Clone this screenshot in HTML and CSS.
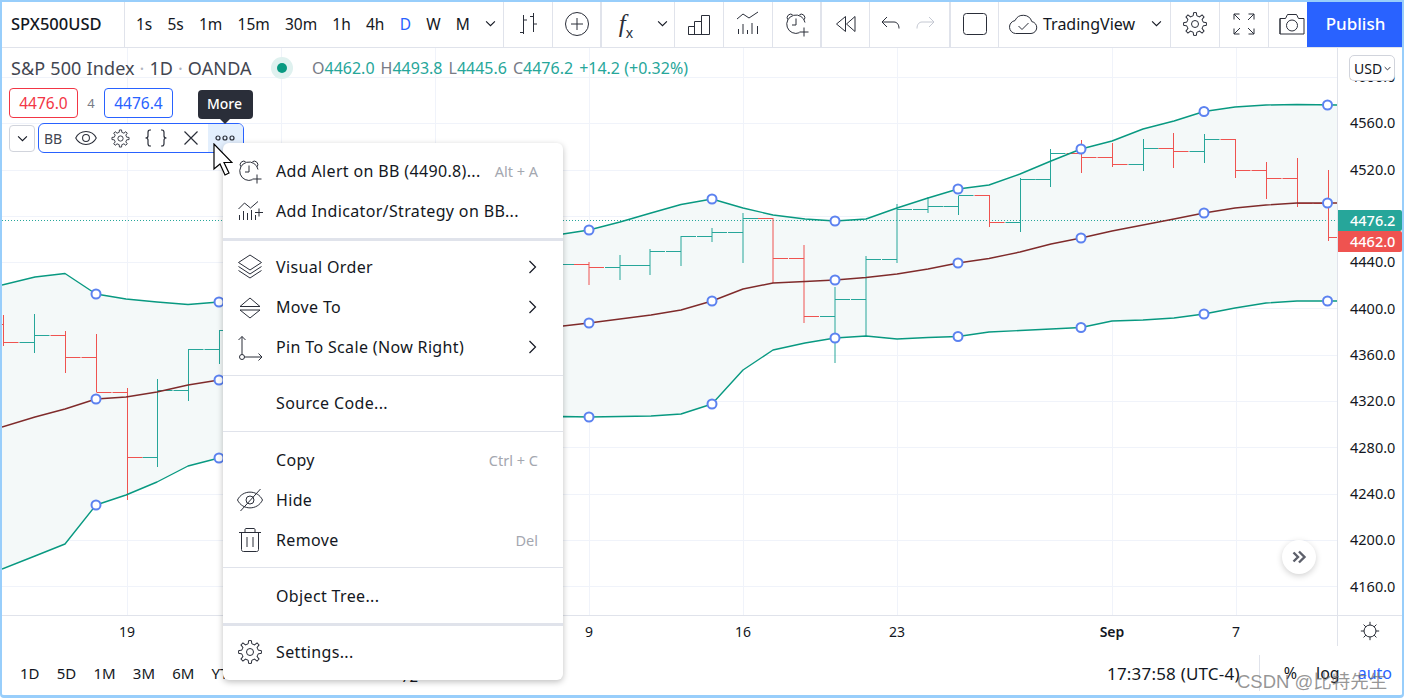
FILE: index.html
```html
<!DOCTYPE html>
<html lang="en">
<head>
<meta charset="utf-8">
<title>SPX500USD</title>
<link rel="stylesheet" href="styles.css">
</head>
<body>
<svg class="defs" aria-hidden="true">
  <defs>
    <symbol id="gear" viewBox="0 0 28 28">
      <g id="gs"><path d="M10.8 6.3L12.2 5.8 12.6 2.6H15.4L15.8 5.8 17.2 6.3"/></g>
      <use href="#gs" transform="rotate(45 14 14)"/><use href="#gs" transform="rotate(90 14 14)"/>
      <use href="#gs" transform="rotate(135 14 14)"/><use href="#gs" transform="rotate(180 14 14)"/>
      <use href="#gs" transform="rotate(225 14 14)"/><use href="#gs" transform="rotate(270 14 14)"/>
      <use href="#gs" transform="rotate(315 14 14)"/>
      <circle cx="14" cy="14" r="3.5"/>
    </symbol>
    <symbol id="alarm" viewBox="0 0 28 28">
      <path d="M16.5 22.7A9.2 9.2 0 1 1 22 12.5M4.6 9.5A3.6 3.6 0 0 1 9.5 4.6M16.5 4.6A3.6 3.6 0 0 1 21.4 9.5M13 8.5V15H9M21 17.5V26.5M16.5 22H25.5"/>
    </symbol>
    <symbol id="eye" viewBox="0 0 28 28">
      <path d="M2 14C7 4 21 4 26 14 21 24 7 24 2 14Z"/><circle cx="14" cy="14" r="4"/>
    </symbol>
  </defs>
</svg>
<div class="frame">
  <header class="topbar">
    <div class="cell symbol">SPX500USD</div>
    <div class="cell intervals">
      <span>1s</span><span>5s</span><span>1m</span><span>15m</span><span>30m</span><span>1h</span><span>4h</span><span class="active">D</span><span>W</span><span>M</span>
      <svg class="chev" viewBox="0 0 10 6"><path d="M1 1L5 5 9 1"/></svg>
    </div>
    <div class="cell btn"><svg class="ic" viewBox="0 0 28 28"><path d="M9.5 5V24M6 22.5H9.5M9.5 10H13M19.5 3V22M16 6.5H19.5M19.5 14H23"/></svg></div>
    <div class="cell btn thick"><svg class="ic" viewBox="0 0 28 28"><circle cx="14" cy="14" r="11.5"/><path d="M14 8V20M8 14H20"/></svg></div>
    <div class="cell btn fx"><span class="fxt">f<sub>x</sub></span><svg class="chev" viewBox="0 0 10 6"><path d="M1 1L5 5 9 1"/></svg></div>
    <div class="cell btn"><svg class="ic" viewBox="0 0 28 28"><path d="M3.5 16.5H9.5V24.5H3.5ZM9.5 24.5V11.5H16.5V24.5M16.5 24.5V5.5H24.5V24.5H3.5"/></svg></div>
    <div class="cell btn"><svg class="ic" viewBox="0 0 28 28"><path d="M3 9L9 4 15 8 24 2M4.5 24V19M9 24V14M13.5 24V20M18 24V13M23.5 24V16"/></svg></div>
    <div class="cell btn thick"><svg class="ic"><use href="#alarm"/></svg></div>
    <div class="cell btn n48"><svg class="ic" viewBox="0 0 28 28"><path d="M13.5 6.5L4.5 14 13.5 21.5ZM23 6.5L14.5 14 23 21.5Z"/></svg></div>
    <div class="cell btn undo thick">
      <svg class="ic" viewBox="0 0 28 28"><path d="M10 7L5 12 10 17M5 12H17C20 12 22 14.5 22 18.5"/></svg>
      <svg class="ic off" viewBox="0 0 28 28"><path d="M18 7L23 12 18 17M23 12H11C8 12 6 14.5 6 18.5"/></svg>
    </div>
    <div class="cell btn n48"><svg class="ic" viewBox="0 0 28 28"><rect x="2.500" y="3.500" width="23" height="21" rx="3"/></svg></div>
    <div class="cell layout">
      <svg class="cloud" viewBox="0 0 30 22"><path d="M7.500 20.500H23A6 6 0 0 0 23.800 8.600 9 9 0 0 0 7 7.600 6.500 6.500 0 0 0 7.500 20.500ZM10.500 13L14 16.500 20.500 10"/></svg>
      <span class="layout-name">TradingView</span>
      <svg class="chev" viewBox="0 0 10 6"><path d="M1 1L5 5 9 1"/></svg>
    </div>
    <div class="cell btn"><svg class="ic"><use href="#gear"/></svg></div>
    <div class="cell btn"><svg class="ic" viewBox="0 0 28 28"><path d="M4 9.500V4H9.500M4 4L10 10M18.500 4H24V9.500M24 4L18 10M4 18.500V24H9.500M4 24L10 18M24 18.500V24H18.500M24 24L18 18"/></svg></div>
    <div class="cell camera"><svg class="ic wide" viewBox="0 0 28 22"><path d="M2 5.500H7.500L9.500 1.500H18.500L20.500 5.500H26V21H2ZM2 5.500V21" stroke-linejoin="round"/><circle cx="14" cy="12.500" r="5.500"/></svg></div>
    <button class="publish">Publish</button>
  </header>

  <main class="main">
    <div class="chart">
      <svg class="plot" viewBox="2 48 1335 567">
        <path class="grid" d="M127.500 48V615M281.500 48V615M435.500 48V615M589.500 48V615M743.500 48V615M897.500 48V615M1112.500 48V615M1236.500 48V615M2 77.500H1337M2 123.500H1337M2 170.500H1337M2 216.500H1337M2 262.500H1337M2 308.500H1337M2 355.500H1337M2 401.500H1337M2 447.500H1337M2 494.500H1337M2 540.500H1337M2 586.500H1337"/>
        <polygon class="band" points="2,285 35,277 65,273.500 96,294 126,299 157,302 188,304.500 219,302 563,234 589,230 620,222 651,213 681,204.500 712,199 743,208 773,215 805,219 835,221 866,219 897,208 928,198 958,189 989,185 1020,174 1051,161 1081,149 1112,141 1143,129 1174,121 1204,111.500 1235,107 1266,105 1297,104.500 1337,105 1337,301 1297,301 1266,303 1235,308 1204,314 1174,318 1143,320 1112,321 1081,327.500 1051,329 1020,330.500 989,332 958,336.500 928,337.500 897,339 866,336 835,338 805,343 773,350 743,370 712,404 681,414 651,416 620,416.500 589,417 563,416.500 219,458 188,466 157,482 126,495 96,505 65,544 35,556 2,569"/>
        <path class="lastline" d="M2 220.500H1337"/>
        <path class="up" d="M34.500 314V353M19.500 342.500H34.500M34.500 335.500H49.500M157.500 379V467M142.500 457.500H157.500M157.500 390.500H172.500M188.500 349V401M173.500 390.500H188.500M188.500 349.500H203.500M219.500 330V364M204.500 349.500H219.500M219.500 330.500H234.500M563 264.500H574M620 255V280M605 267.500H620M620 265.500H635M650 249V275M635 265.500H650M650 251.500H665M681 236V266M666 251.500H681M681 236.500H696M712 228V242M697 236.500H712M712 232.500H727M743 213V263M728 232.500H743M743 218.500H758M835 287V363M820 316.500H835M835 299.500H850M866 256V336M851 299.500H866M866 259.500H881M897 204V263M882 259.500H897M897 209.500H912M928 197V213M913 209.500H928M928 206.500H943M958.500 196V215M943.500 206.500H958.500M958.500 195.500H973.500M1020.500 178V232M1005.500 222.500H1020.500M1020.500 179.500H1035.500M1050.500 149V187M1035.500 179.500H1050.500M1050.500 153.500H1065.500M1143.500 139V171M1128.500 164.500H1143.500M1143.500 148.500H1158.500M1204.500 134V163M1189.500 151.500H1204.500M1204.500 139.500H1219.500"/>
        <path class="down" d="M3.500 315V346M2 324.500H3.500M3.500 342.500H18.500M65.500 331V373M50.500 335.500H65.500M65.500 357.500H80.500M96.500 334V392M81.500 357.500H96.500M96.500 392.500H111.500M127.500 388V500M112.500 392.500H127.500M127.500 457.500H142.500M589 262V285M574 264.500H589M589 267.500H604M773 218V283M758 218.500H773M773 258.500H788M804 245V323M789 258.500H804M804 316.500H819M989.500 195V227M974.500 195.500H989.500M989.500 222.500H1004.500M1081.500 140V173M1066.500 153.500H1081.500M1081.500 157.500H1096.500M1112.500 143V167M1097.500 157.500H1112.500M1112.500 164.500H1127.500M1173.500 133V168M1158.500 148.500H1173.500M1173.500 151.500H1188.500M1235.500 139V178M1220.500 139.500H1235.500M1235.500 170.500H1250.500M1266.500 162V199M1251.500 170.500H1266.500M1266.500 178.500H1281.500M1297.500 158V207M1282.500 178.500H1297.500M1297.500 203.500H1312.500M1328.500 170V241M1313.500 203.500H1328.500M1328.500 237.500H1337"/>
        <polyline class="bb" points="2,285 35,277 65,273.500 96,294 126,299 157,302 188,304.500 219,302 563,234 589,230 620,222 651,213 681,204.500 712,199 743,208 773,215 805,219 835,221 866,219 897,208 928,198 958,189 989,185 1020,174 1051,161 1081,149 1112,141 1143,129 1174,121 1204,111.500 1235,107 1266,105 1297,104.500 1337,105"/>
        <polyline class="bb" points="2,569 35,556 65,544 96,505 126,495 157,482 188,466 219,458 563,416.500 589,417 620,416.500 651,416 681,414 712,404 743,370 773,350 805,343 835,338 866,336 897,339 928,337.500 958,336.500 989,332 1020,330.500 1051,329 1081,327.500 1112,321 1143,320 1174,318 1204,314 1235,308 1266,303 1297,301 1337,301"/>
        <polyline class="basis" points="2,427 35,417 65,409 96,399 126,397 157,392 188,385 219,380 563,326 589,323 620,319 651,315 681,310 712,301 743,289 773,283 805,281.500 835,280 866,277.500 897,274 928,269 958,263 989,258.500 1020,252 1051,244 1081,238 1112,231 1143,225 1174,219 1204,213 1235,208 1266,205 1297,203 1337,203"/>
        <g class="anchors">
          <circle cx="96" cy="294" r="4.500"/><circle cx="96" cy="399" r="4.500"/><circle cx="96" cy="505" r="4.500"/>
          <circle cx="219" cy="302" r="4.500"/><circle cx="219" cy="380" r="4.500"/><circle cx="219" cy="458" r="4.500"/>
          <circle cx="589" cy="230" r="4.500"/><circle cx="589" cy="323" r="4.500"/><circle cx="589" cy="417" r="4.500"/>
          <circle cx="712" cy="199" r="4.500"/><circle cx="712" cy="301" r="4.500"/><circle cx="712" cy="404" r="4.500"/>
          <circle cx="835" cy="221" r="4.500"/><circle cx="835" cy="280" r="4.500"/><circle cx="835" cy="338" r="4.500"/>
          <circle cx="958" cy="189" r="4.500"/><circle cx="958" cy="263" r="4.500"/><circle cx="958" cy="336.500" r="4.500"/>
          <circle cx="1081" cy="149" r="4.500"/><circle cx="1081" cy="238" r="4.500"/><circle cx="1081" cy="327.500" r="4.500"/>
          <circle cx="1204" cy="111.500" r="4.500"/><circle cx="1204" cy="213" r="4.500"/><circle cx="1204" cy="314" r="4.500"/>
          <circle cx="1327.500" cy="105" r="4.500"/><circle cx="1327.500" cy="203" r="4.500"/><circle cx="1327.500" cy="301" r="4.500"/>
        </g>
      </svg>

      <div class="legend">
        <div class="legend-title">
          <span class="title">S&amp;P 500 Index <i>·</i> 1D <i>·</i> OANDA</span>
          <span class="status"></span>
          <span class="ohlc">
            <span><b>O</b>4462.0</span><span><b>H</b>4493.8</span><span><b>L</b>4445.6</span><span><b>C</b>4476.2</span><span>+14.2 (+0.32%)</span>
          </span>
        </div>
        <div class="order">
          <span class="tag sell">4476.0</span><span class="spread">4</span><span class="tag buy">4476.4</span>
        </div>
        <div class="study">
          <span class="collapse"><svg class="chev" viewBox="0 0 10 6"><path d="M1 1L5 5 9 1"/></svg></span>
          <div class="study-box">
            <span class="study-name">BB</span>
            <span class="tool"><svg class="i24"><use href="#eye"/></svg></span>
            <span class="tool"><svg class="i21"><use href="#gear"/></svg></span>
            <span class="tool"><svg class="i24" viewBox="0 0 24 24"><path d="M7 4H6C4.500 4 4 5 4 6.500V10C4 11 3.500 12 1.500 12 3.500 12 4 13 4 14V17.500C4 19 4.500 20 6 20H7M17 4H18C19.500 4 20 5 20 6.500V10C20 11 20.500 12 22.500 12 20.500 12 20 13 20 14V17.500C20 19 19.500 20 18 20H17"/></svg></span>
            <span class="tool"><svg class="i24" viewBox="0 0 24 24"><path d="M5.500 5.500L18.500 18.500M18.500 5.500L5.500 18.500"/></svg></span>
            <span class="tool more"><svg class="i24" viewBox="0 0 24 24"><circle cx="5" cy="12" r="2"/><circle cx="12" cy="12" r="2"/><circle cx="19" cy="12" r="2"/></svg></span>
          </div>
        </div>
      </div>
      <span class="goto"><svg viewBox="0 0 18 18"><path d="M3.500 4.500L8 9 3.500 13.500M9 3.500L14.500 9 9 14.500"/></svg></span>
    </div>
    <aside class="priceaxis">
      <span class="currency">USD<svg viewBox="0 0 10 6"><path d="M1 1L5 5 9 1"/></svg></span>
      <span>4600.0</span><span>4560.0</span><span>4520.0</span><span>4480.0</span><span>4440.0</span><span>4400.0</span><span>4360.0</span><span>4320.0</span><span>4280.0</span><span>4240.0</span><span>4200.0</span><span>4160.0</span>
      <em class="plabel last">4476.2</em>
      <em class="plabel hl">4462.0</em>
    </aside>
  </main>

  <div class="timeaxis">
    <svg class="timescale" viewBox="2 0 1335 30">
      <text x="127" y="21">19</text><text x="589" y="21">9</text><text x="743" y="21">16</text><text x="897" y="21">23</text><text x="1112" y="21" class="strong">Sep</text><text x="1236" y="21">7</text>
    </svg>
    <div class="sun"><svg viewBox="0 0 24 24"><circle cx="12" cy="12" r="6.500"/><path d="M12 2V5.500M12 18.500V22M2 12H5.500M18.500 12H22M5 5L7.500 7.500M19 5L16.500 7.500M5 19L7.500 16.500M19 19L16.500 16.500"/></svg></div>
  </div>

  <footer class="bottombar">
    <div class="ranges">
      <span>1D</span><span>5D</span><span>1M</span><span>3M</span><span>6M</span><span>YTD</span><span>1Y</span>
    </div>
    <span class="peek">72</span>
    <div class="status-right">
      <span class="clock">17:37:58 (UTC-4)</span>
      <span class="vsep"></span>
      <span>%</span><span>log</span><span class="auto">auto</span>
    </div>
  </footer>

  <div class="tooltip">More</div>

  <nav class="menu">
    <div class="row"><svg class="ic"><use href="#alarm"/></svg><span>Add Alert on BB (4490.8)...</span><kbd>Alt + A</kbd></div>
    <div class="row"><svg class="ic" viewBox="0 0 28 28"><path d="M2.500 12L8.500 6 14.500 11 22 4.500M3.500 23V18M7.500 23V14M11.500 23V16M15.500 23V13M19.500 23V18M23 11.500V19.500M19 15.500H27"/></svg><span>Add Indicator/Strategy on BB...</span></div>
    <div class="sep thick"></div>
    <div class="row"><svg class="ic" viewBox="0 0 28 28"><path d="M14 2L25.500 9.500 14 17 2.500 9.500ZM2.500 13.500L14 21 25.500 13.500M2.500 17.500L14 25 25.500 17.500"/></svg><span>Visual Order</span><svg class="arrow" viewBox="0 0 8 14"><path d="M1 1L7 7 1 13"/></svg></div>
    <div class="row"><svg class="ic" viewBox="0 0 28 28"><path d="M4 13.500L14 5 24 13.500ZM4 13.500H24M4 17H24L14 25Z"/></svg><span>Move To</span><svg class="arrow" viewBox="0 0 8 14"><path d="M1 1L7 7 1 13"/></svg></div>
    <div class="row"><svg class="ic" viewBox="0 0 28 28"><circle cx="6" cy="24" r="2.500"/><path d="M6 21.500V3.500M2.500 7L6 3.500 9.500 7M8.500 24H26M22.500 20.500L26 24 22.500 27.500"/></svg><span>Pin To Scale (Now Right)</span><svg class="arrow" viewBox="0 0 8 14"><path d="M1 1L7 7 1 13"/></svg></div>
    <div class="sep gap-b"></div>
    <div class="row"><span class="noicon">Source Code...</span></div>
    <div class="sep"></div>
    <div class="row"><span class="noicon">Copy</span><kbd>Ctrl + C</kbd></div>
    <div class="row"><svg class="ic" viewBox="0 0 28 28"><path d="M1.500 14C6.500 3.500 21.500 3.500 26.500 14 21.500 24.500 6.500 24.500 1.500 14ZM10 14A4 4 0 0 1 18 14 4 4 0 0 1 10 14ZM4.500 25L24.500 3"/></svg><span>Hide</span></div>
    <div class="row"><svg class="ic" viewBox="0 0 28 28"><path d="M3 6.500H25M9 6.500V3.500C9 3 9.500 2.500 10 2.500H18C18.500 2.500 19 3 19 3.500V6.500M5.500 6.500V23.500C5.500 24.800 6.200 25.500 7.500 25.500H20.500C21.800 25.500 22.500 24.800 22.500 23.500V6.500M11 11V21M17 11V21"/></svg><span>Remove</span><kbd>Del</kbd></div>
    <div class="sep gap-t"></div>
    <div class="row"><span class="noicon">Object Tree...</span></div>
    <div class="sep thick"></div>
    <div class="row"><svg class="ic"><use href="#gear"/></svg><span>Settings...</span></div>
  </nav>

  <svg class="cursor" viewBox="0 0 20 34"><path d="M1 1V26L7 21 12 32 16 30 11 19.500 19 19.500Z"/></svg>
  <div class="watermark">CSDN @比特先生</div>
</div>
</body>
</html>
```
FILE: styles.css
```css
* { box-sizing: border-box; }
html, body { margin: 0; height: 100%; overflow: hidden; background: #fff; }
body { font-family: "Noto Sans", "Liberation Sans", sans-serif; color: #131722; }
svg { fill: none; stroke: #2a2e39; stroke-width: 1; flex: none; }
.defs { position: absolute; width: 0; height: 0; }
.frame {
  position: relative; width: 1404px; height: 698px; display: flex; flex-direction: column; overflow: hidden;
  border: solid #98cefb; border-width: 2px 2px 3px 2px; border-radius: 0 0 4px 4px; background: #fff;
}

/* top toolbar */
.topbar { display: flex; height: 46px; border-bottom: 1px solid #e0e3eb; flex: none; }
.cell { display: flex; align-items: center; height: 100%; padding-bottom: 2px; border-right: 1px solid #e0e3eb; flex: none; }
.symbol { width: 123px; padding-left: 9px; font-size: 16.5px; font-weight: 500; }
.intervals { width: 379px; padding-left: 11px; gap: 15.2px; font-size: 15.5px; }
.intervals .active { color: #2962ff; }
.chev { width: 11px; height: 7px; stroke: #131722; }
.btn { width: 49px; justify-content: center; }
.n48 { width: 48px; }
.thick { border-right-width: 2px; }
.ic { width: 28px; height: 28px; }
.fx { width: 73px; justify-content: flex-start; padding-left: 10px; gap: 17px; }
.fxt { width: 28px; font: italic 25px "Liberation Serif", serif; line-height: 28px; text-align: center; color: #2a2e39; }
.fxt sub { font: 14px "Noto Sans", sans-serif; line-height: 0; }
.undo { width: 81px; gap: 6px; padding-right: 4px; }
.off { stroke: #c4c8d2; }
.layout { width: 172px; padding-left: 9px; font-size: 16px; }
.cloud { width: 30px; height: 22px; }
.layout-name { margin-left: 5px; width: 108px; }
.camera { flex: 1; border: 0; padding-left: 9px; overflow: hidden; }
.wide { height: 22px; }
.publish { width: 95px; height: 100%; padding: 0 0 2px 2px; border: 0; background: #2962ff; color: #fff; font: 500 17px "Noto Sans", sans-serif; flex: none; }

/* chart */
.main { display: flex; height: 567px; flex: none; }
.chart { position: relative; flex: 1; overflow: hidden; }
.plot { display: block; width: 1335px; height: 567px; }
.grid { stroke: #f0f3fa; }
.band { fill: #f4f9f9; stroke: none; }
.lastline { stroke: #26a69a; stroke-dasharray: 1 2; }
.up { stroke: #26a69a; }
.down { stroke: #ef5350; }
.bb { fill: none; stroke: #089981; stroke-width: 1.4; stroke-linejoin: round; }
.basis { fill: none; stroke: #7f2b2b; stroke-width: 1.4; stroke-linejoin: round; }
.anchors circle { fill: #fff; stroke: #5c82f0; stroke-width: 2; }

.legend { position: absolute; left: 7px; top: 8px; display: flex; flex-direction: column; }
.legend-title { display: flex; align-items: center; height: 24px; padding-left: 2px; }
.title { font-size: 18px; letter-spacing: .15px; color: #434651; width: 241px; white-space: nowrap; }
.title i { font-style: normal; color: #b2b5be; }
.status { width: 10px; height: 10px; margin: 0 0 0 25px; border-radius: 50%; background: #089981; box-shadow: 0 0 0 6px #dff1ef; }
.ohlc { display: flex; gap: 6px; margin-left: 25px; font-size: 16px; color: #26a69a; white-space: nowrap; }
.ohlc b { font-weight: 400; color: #787b86; }
.order { display: flex; align-items: center; height: 30px; margin-top: 8px; }
.tag { width: 69px; height: 30px; line-height: 28px; border: 1px solid; border-radius: 4px; text-align: center; font-size: 15.5px; background: #fff; }
.sell { color: #f23645; border-color: #f23645; }
.buy { color: #2962ff; border-color: #2962ff; }
.spread { width: 26px; text-align: center; font-size: 13px; color: #787b86; }
.study { display: flex; align-items: center; margin-top: 5px; height: 30px; gap: 3px; }
.collapse { display: flex; align-items: center; justify-content: center; width: 26px; height: 27px; border: 1px solid #d1d4dc; border-radius: 4px; background: #fff; }
.study-box { display: flex; align-items: center; width: 206px; height: 30px; border: 1px solid #2962ff; border-radius: 6px; background: #fff; overflow: hidden; }
.study-name { width: 29px; padding-left: 5px; font-size: 14px; color: #434651; }
.tool { display: flex; align-items: center; justify-content: center; width: 35px; height: 100%; }
.tool svg { stroke-width: 1.2; }
.i24 { width: 24px; height: 24px; }
.i21 { width: 21px; height: 21px; }
.more { background: #e3effd; width: 35px; margin-left: auto; padding-right: 1px; }
.goto { position: absolute; left: 1280px; top: 492px; display: flex; align-items: center; justify-content: center; width: 34px; height: 34px; border-radius: 50%; background: #fff; box-shadow: 0 2px 6px rgba(0,0,0,.18); }
.goto svg { width: 18px; height: 18px; stroke: #5d606b; stroke-width: 2.4; }

.priceaxis { position: relative; width: 65px; flex: none; display: flex; flex-direction: column; padding: 5px 0 0 12px; border-left: 1px solid #e0e3eb; font-size: 14.5px; color: #131722; }
.priceaxis > span:not(.currency) { display: flex; align-items: center; height: 46.33px; flex: none; }
.currency { position: absolute; left: 11px; top: 7px; display: flex; align-items: center; gap: 2px; width: 46px; height: 26px; padding-left: 4px; border: 1px solid #d1d4dc; border-radius: 5px; background: #fff; z-index: 1; font-size: 14px; }
.currency svg { width: 7px; height: 5px; stroke-width: 1.4; }
.plabel { position: absolute; left: 0; width: 64px; height: 21px; line-height: 21px; padding-left: 12px; font-style: normal; font-weight: 500; color: #fff; border-radius: 0 2px 2px 0; }
.last { top: 162px; background: #26a69a; }
.hl { top: 183px; background: #ef5350; }

/* time axis */
.timeaxis { display: flex; height: 31px; border-top: 1px solid #e0e3eb; flex: none; }
.timescale { width: 1335px; height: 30px; display: block; stroke: none; }
.timescale text { fill: #131722; stroke: none; font-size: 14px; text-anchor: middle; }
.timescale .strong { font-weight: 600; }
.sun { flex: 1; display: flex; align-items: center; justify-content: center; border-left: 1px solid #e0e3eb; }
.sun svg { width: 22px; height: 22px; stroke: #131722; }

/* bottom bar */
.bottombar { position: relative; display: flex; flex: 1; align-items: center; padding-top: 5px; font-size: 15px; }
.ranges { display: flex; gap: 17.2px; width: 373px; height: 100%; padding: 5px 0 0 18px; align-items: center; margin-top: -5px; white-space: nowrap; overflow: hidden; }
.peek { margin: 6px 0 0 26px; }
.status-right { display: flex; align-items: center; margin-left: auto; height: 100%; font-size: 16px; }
.clock { font-size: 17px; letter-spacing: .2px; margin-right: 19px; }
.vsep { width: 1px; height: 36px; margin-right: 24px; background: #e0e3eb; }
.status-right span:nth-child(4) { margin: 0 22px 0 19px; }
.auto { color: #2962ff; margin: 0 10px 0 -4px; }

/* tooltip and context menu */
.tooltip { position: absolute; left: 196px; top: 88px; width: 55px; height: 29px; padding-right: 2px; line-height: 28px; text-align: center; font-size: 14px; font-weight: 500; color: #fff; background: #2a2e39; border-radius: 4px; }
.tooltip::after { content: ""; position: absolute; left: 22px; top: 29px; border: 5px solid transparent; border-top-color: #2a2e39; border-bottom: 0; }
.menu { position: absolute; left: 221px; top: 141px; width: 340px; height: 537px; padding: 8px 0; background: #fff; border-radius: 6px; box-shadow: 0 2px 6px rgba(0,0,0,.25); }
.row { display: flex; align-items: center; height: 40px; padding: 0 25px 0 13px; gap: 12px; font-size: 16px; letter-spacing: .35px; color: #131722; white-space: nowrap; }
.noicon { margin-left: 40px; }
.row kbd { margin-left: auto; font: 14.5px "Noto Sans", sans-serif; letter-spacing: 0; color: #a4a7b0; }
.arrow { width: 9px; height: 14px; margin: 0 1px 0 auto; stroke: #131722; stroke-width: 1.2; }
.sep { height: 1px; margin: 8px 0; background: #e0e3eb; }
.gap-b { margin-bottom: 7px; }
.gap-t { margin-top: 7px; }
.thick.sep { height: 3px; margin: 7px 0 6px; }
.cursor { position: absolute; left: 211px; top: 141px; width: 20px; height: 34px; fill: #fff; stroke: #000; stroke-width: 1.2; }
.watermark { position: absolute; left: 1235px; top: 665px; font: 18.5px "Liberation Sans", "Noto Sans CJK SC", sans-serif; color: rgba(110,110,110,.72); white-space: nowrap; }
```
